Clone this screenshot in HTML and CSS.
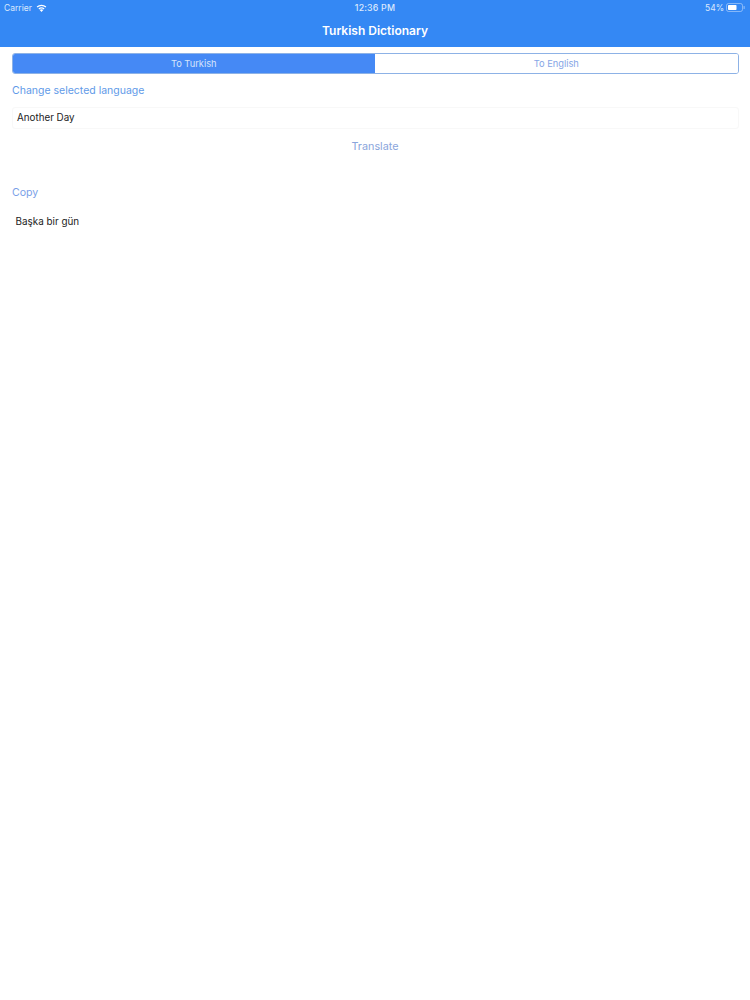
FILE: index.html
```html
<!DOCTYPE html>
<html lang="en">
<head>
<meta charset="utf-8">
<title>Turkish Dictionary</title>
<link rel="stylesheet" href="styles.css">
</head>
<body>
<header class="navbar">
  <div class="status">
    <div class="status-left">
      <span>Carrier</span>
      <svg class="wifi" viewBox="0 0 12 9" width="11" height="8"><path d="M6 9 4 6.7a3 3 0 0 1 4 0Z" fill="#fff"/><path d="M3 5.6a4.6 4.6 0 0 1 6 0" fill="none" stroke="#fff" stroke-width="1.3"/><path d="M1 3.4a7.6 7.6 0 0 1 10 0" fill="none" stroke="#fff" stroke-width="1.3"/></svg>
    </div>
    <div class="status-time">12:36 PM</div>
    <div class="status-right">
      <span>54%</span>
      <svg class="battery" viewBox="0 0 20 9" width="20" height="9"><rect x=".5" y=".5" width="16" height="8" rx="2" fill="none" stroke="#fff" stroke-opacity=".4"/><rect x="2" y="2" width="8.5" height="5" rx=".8" fill="#fff"/><rect x="17.5" y="3" width="1.3" height="3" rx=".6" fill="#fff" fill-opacity=".4"/></svg>
    </div>
  </div>
  <h1 class="title">Turkish Dictionary</h1>
</header>
<main class="content">
  <div class="segments">
    <div class="segment segment-active">To Turkish</div>
    <div class="segment">To English</div>
  </div>
  <a class="link change-link">Change selected language</a>
  <div class="field">Another Day</div>
  <div class="translate"><a class="link translate-link">Translate</a></div>
  <a class="link copy-link">Copy</a>
  <p class="result">Başka bir gün</p>
</main>
</body>
</html>
```

FILE: styles.css
```css
* { box-sizing: border-box; }
html, body { margin: 0; padding: 0; }
body {
  width: 750px;
  height: 1000px;
  background: #fff;
  font-family: Inter, "Liberation Sans", sans-serif;
  overflow: hidden;
}
.navbar {
  height: 47px;
  background: #3488f4;
  color: #fff;
  display: flex;
  flex-direction: column;
}
.status {
  height: 15px;
  padding: 0 4px;
  display: flex;
  align-items: center;
  justify-content: space-between;
  position: relative;
  font-size: 8.5px;
  color: #dbe9fd;
}
.status-left, .status-right { display: flex; align-items: center; gap: 4px; }
.status-right { gap: 2px; padding-right: 0; }
.status-time {
  position: absolute;
  left: 0;
  right: 0;
  text-align: center;
  font-size: 8.8px;
  font-weight: 500;
  letter-spacing: .2px;
}
.title {
  margin: 0;
  height: 32px;
  line-height: 31px;
  text-align: center;
  font-size: 12px;
  font-weight: 600;
}
.content { padding: 6px 11.5px 0; display: flex; flex-direction: column; }
.segments {
  display: flex;
  height: 21px;
  border: 1px solid #8db2e6;
  border-radius: 3px;
  overflow: hidden;
}
.segment {
  flex: 1;
  display: flex;
  align-items: center;
  justify-content: center;
  font-size: 9.3px;
  color: #86a5e6;
  background: #fff;
}
.segment-active { background: #4589f5; color: #d6e4fb; }
.link { color: #5f9ae8; }
.change-link { margin-top: 9px; padding-left: .5px; font-size: 10.5px; line-height: 16px; }
.field {
  margin-top: 8px;
  height: 22px;
  padding-left: 4.5px;
  border: 1px solid #f8f8f8;
  border-radius: 3px;
  font-size: 9.8px;
  line-height: 19px;
  color: #222;
}
.translate { margin-top: 7px; text-align: center; line-height: 16px; }
.translate-link { font-size: 10.8px; color: #8aa5dc; }
.copy-link { margin-top: 30px; padding-left: .5px; font-size: 10.6px; line-height: 16px; color: #7a9fe8; }
.result {
  margin: 12px 0 0 4px;
  font-size: 9.9px;
  line-height: 16px;
  color: #222;
}
```
